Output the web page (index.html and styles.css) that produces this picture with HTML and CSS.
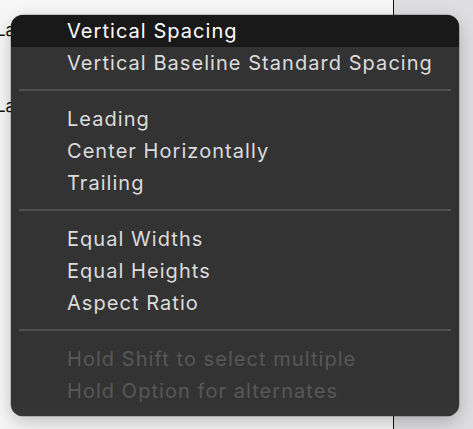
FILE: index.html
```html
<!DOCTYPE html>
<html>
<head>
<meta charset="utf-8">
<link rel="stylesheet" href="styles.css">
</head>
<body>
<div class="backdrop">
  <div class="canvas">
    <div class="label l1">Label</div>
    <div class="label l2">Label</div>
  </div>
  <div class="side"></div>
</div>
<div class="menu">
  <div class="item selected">Vertical Spacing</div>
  <div class="item">Vertical Baseline Standard Spacing</div>
  <div class="sep"></div>
  <div class="item">Leading</div>
  <div class="item">Center Horizontally</div>
  <div class="item">Trailing</div>
  <div class="sep"></div>
  <div class="item">Equal Widths</div>
  <div class="item">Equal Heights</div>
  <div class="item">Aspect Ratio</div>
  <div class="sep"></div>
  <div class="item disabled">Hold Shift to select multiple</div>
  <div class="item disabled">Hold Option for alternates</div>
  <div class="foot"></div>
</div>
</body>
</html>
```
FILE: styles.css
```css
html, body {
  margin: 0;
  padding: 0;
  width: 473px;
  height: 429px;
  overflow: hidden;
  font-family: Inter, "Liberation Sans", sans-serif;
}
.backdrop {
  display: flex;
  height: 429px;
}
.canvas {
  width: 394px;
  background: #f6f6f6;
  border-right: 1px solid #111;
  padding-top: 20px;
  box-sizing: border-box;
}
.label {
  font-size: 17px;
  color: #111;
  margin-left: -4px;
  line-height: 20px;
}
.l2 {
  margin-top: 56px;
}
.side {
  flex: 1;
  background: #dedee0;
}
.menu {
  position: absolute;
  left: 11px;
  top: 15px;
  width: 448px;
  background: #333333;
  border-radius: 12px;
  overflow: hidden;
  box-shadow: 0 0 0 0.5px rgba(0,0,0,0.35), 0 6px 18px rgba(0,0,0,0.22);
}
.item {
  height: 32px;
  line-height: 32px;
  padding-left: 56px;
  font-size: 20px;
  letter-spacing: 1.05px;
  color: #dcdcdc;
  white-space: nowrap;
}
.item.selected {
  background: #191919;
  color: #ffffff;
}
.item.disabled {
  color: #585858;
}
.sep {
  height: 24px;
  display: flex;
  align-items: flex-start;
  padding: 10px 8px 0;
  box-sizing: border-box;
}
.sep::before {
  content: "";
  flex: 1;
  height: 2px;
  background: #4f4f4f;
}
.foot {
  height: 9px;
  background: #363636;
}
```
